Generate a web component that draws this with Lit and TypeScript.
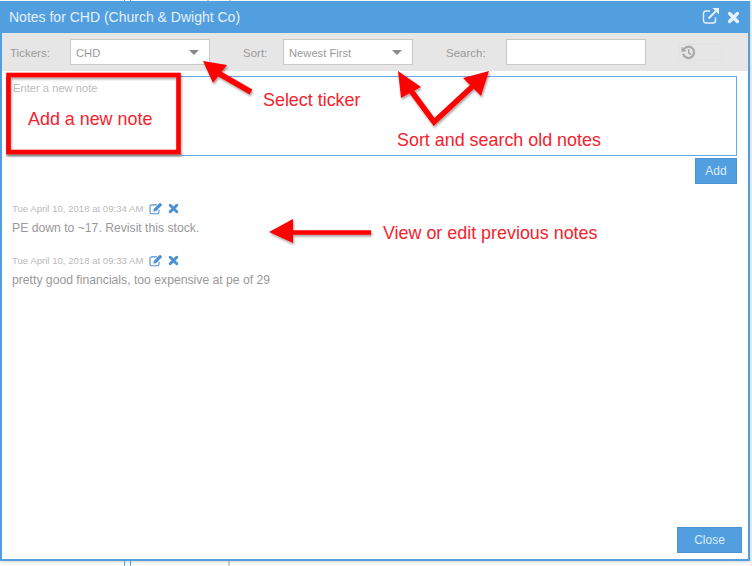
import { LitElement, html, css, svg } from "lit";
import { customElement } from "lit/decorators.js";

const closeIcon = (cls: string) => html`<svg class=${cls} viewBox="0 0 12 12"><path d="M2.4 2.4 9.6 9.6M9.6 2.4 2.4 9.6" fill="none" stroke="currentColor" stroke-width="3.2" stroke-linecap="round"/></svg>`;
const editIcon = html`<svg class="edit" viewBox="0 0 14 13"><path d="M10 7.8v2.2a1.7 1.7 0 0 1-1.7 1.7H2.7A1.7 1.7 0 0 1 1 10V4.6a1.7 1.7 0 0 1 1.7-1.7h5.2" fill="none" stroke="currentColor" stroke-width="1.1"/><path d="M4.8 6.9 10.6.9a.6.6 0 0 1 .8 0l1.5 1.5a.6.6 0 0 1 0 .8L7 9.2l-2.6.3z" fill="currentColor"/></svg>`;

const arrows = svg`
  <defs><filter id="sh" x="-20%" y="-20%" width="150%" height="150%"><feDropShadow dx="1" dy="2" stdDeviation="1.2" flood-color="#000" flood-opacity=".35"/></filter></defs>
  <rect x="6" y="154" width="176" height="2.500" fill="#c4c4c4"/>
  <g filter="url(#sh)">
    <rect x="8.500" y="75" width="170" height="77" fill="none" stroke="#f00" stroke-width="4.600"/>
    <path d="M203 61 227 65 213 83z" fill="#f00"/>
    <path d="M218 73 251 92" fill="none" stroke="#f00" stroke-width="5.500"/>
    <path d="M398 71 421 87 401 98z" fill="#f00"/>
    <path d="M489 71 463 78 481 96z" fill="#f00"/>
    <path d="M409 88 434 122 474 85" fill="none" stroke="#f00" stroke-width="5.500"/>
    <path d="M269 232 293 219 293 243z" fill="#f00"/>
    <path d="M290 232.500H371" fill="none" stroke="#f00" stroke-width="4.500"/>
  </g>`;

@customElement("app-root")
export class AppRoot extends LitElement {
  static styles = css`
    :host { display: block; position: relative; width: 752px; height: 566px; overflow: hidden; background: #fff; font-family: "Liberation Sans", Arial, sans-serif; font-weight: 400; color: #999; }
    .back { position: absolute; inset: 0; }
    .window { position: absolute; left: 0; top: 1px; width: 750px; height: 560px; box-sizing: border-box; border: 2px solid #529fe0; border-top: 0; background: #fff; display: flex; flex-direction: column; box-shadow: 0 1px 3px rgba(0,0,0,.18); }
    .title { height: 32px; flex: none; background: #529fe0; color: #e6f1fb; display: flex; align-items: center; padding: 0 8px 0 7px; font-size: 14px; }
    .title span { flex: 1; }
    .title svg { display: block; color: #e8f2fb; }
    .share { width: 18px; height: 18px; margin: -2px 7px 0 0; }
    .x { width: 13px; height: 13px; }
    .bar { height: 38px; flex: none; background: #e6e6e6; display: flex; align-items: center; font-size: 11.5px; color: #999; }
    .bar label { display: block; padding-top: 1px; }
    .field { box-sizing: border-box; height: 26px; background: #fff; border: 1px solid #c9c9c9; display: flex; align-items: center; justify-content: space-between; padding: 1px 10px 0 5px; font-size: 11.2px; color: #999; }
    .caret { width: 0; height: 0; margin-top: -1px; border-left: 5.5px solid transparent; border-right: 5.5px solid transparent; border-top: 5.5px solid #8a8a8a; }
    .l1 { margin-left: 8px; width: 60px; }
    .f1 { width: 140px; }
    .l2 { margin-left: 33px; width: 40px; }
    .f2 { width: 130px; }
    .l3 { margin-left: 33px; width: 60px; }
    .f3 { width: 140px; }
    .hist { box-sizing: border-box; margin-left: 33px; width: 43px; height: 17px; border: 1px solid #e2e2e2; display: flex; align-items: center; padding-left: 1px; }
    .hist svg { width: 15px; height: 15px; display: block; color: #a9a9a9; }
    .body { flex: 1; display: flex; flex-direction: column; padding: 5px 11px 6px 4px; min-height: 0; }
    .ta { box-sizing: border-box; height: 80px; flex: none; border: 1px solid #62a9e4; padding: 5px 6px; font-size: 11.2px; color: #bbb; }
    .add-row { display: flex; justify-content: flex-end; margin-top: 2px; }
    .btn { box-sizing: border-box; background: #529fe0; border: 1px solid #4a94d3; color: #dcecf9; font-size: 12px; display: flex; align-items: center; justify-content: center; }
    .add { width: 42px; height: 26px; }
    .notes { flex: 1; padding: 17px 0 0 6px; }
    .note { margin-bottom: 12px; height: 40px; display: flex; flex-direction: column; }
    .meta { height: 15px; flex: none; display: flex; align-items: center; font-size: 9.6px; color: #bbb; }
    .edit { width: 14px; height: 13px; margin-left: 6px; color: #4a90d2; display: block; }
    .del { width: 11px; height: 11px; margin-left: 5px; color: #4a90d2; display: block; }
    .text { font-size: 12.2px; line-height: 25px; color: #999; }
    .foot { display: flex; justify-content: flex-end; margin-right: -5px; }
    .close { width: 65px; height: 26px; }
    .overlay { position: absolute; left: 0; top: 0; width: 752px; height: 566px; pointer-events: none; }
    .note-a { position: absolute; color: #f5222d; font-size: 17.9px; line-height: 20px; white-space: nowrap; }
    .a1 { left: 28px; top: 109px; }
    .a2 { left: 263px; top: 90px; }
    .a3 { left: 397px; top: 130px; }
    .a4 { left: 383px; top: 223px; }
    .tick { position: absolute; width: 1px; }
    .blue { background: #5fa8e4; }
    .gray { background: #cfcfcf; width: 2px; }
    .t { top: 0; height: 1px; }
    .b { top: 561px; height: 5px; }
    .rail { position: absolute; left: 750px; top: 0; width: 2px; height: 566px; background: #f2f2f2; }
  `;

  render() {
    return html`
      <div class="back">
        <i class="tick blue t" style="left:124px"></i><i class="tick blue t" style="left:130px"></i>
        <i class="tick gray t" style="left:207px"></i><i class="tick gray t" style="left:229px"></i>
        <i class="tick blue b" style="left:124px"></i><i class="tick blue b" style="left:130px"></i>
        <i class="tick gray b" style="left:228px"></i>
        <div class="rail"></div>
      </div>
      <div class="window">
        <div class="title">
          <span>Notes for CHD (Church &amp; Dwight Co)</span>
          <svg class="share" viewBox="0 0 18 18"><path d="M13.5 10.5v3a2.5 2.5 0 0 1-2.5 2.5H4a2.5 2.5 0 0 1-2.5-2.5V6.500A2.500 2.500 0 0 1 4 4h4" fill="none" stroke="currentColor" stroke-width="1.4"/><path d="M6.500 11.500 14 4" fill="none" stroke="currentColor" stroke-width="2"/><path d="M10.500 1H17v6.500z" fill="currentColor"/></svg>
          ${closeIcon("x")}
        </div>
        <div class="bar">
          <label class="l1">Tickers:</label>
          <div class="field f1">CHD<i class="caret"></i></div>
          <label class="l2">Sort:</label>
          <div class="field f2">Newest First<i class="caret"></i></div>
          <label class="l3">Search:</label>
          <div class="field f3"></div>
          <div class="hist"><svg viewBox="0 0 16 16"><path d="M3 4.500A6 6 0 1 1 2.200 9.500" fill="none" stroke="currentColor" stroke-width="2.400"/><path d="M0.500 1.800 6 6.500 0.500 7.500z" fill="currentColor"/><path d="M8.300 4.500v4l2.700 1.700" fill="none" stroke="currentColor" stroke-width="1.800"/></svg></div>
        </div>
        <div class="body">
          <div class="ta">Enter a new note</div>
          <div class="add-row"><div class="btn add">Add</div></div>
          <div class="notes">
            <div class="note">
              <div class="meta">Tue April 10, 2018 at 09:34 AM ${editIcon}${closeIcon("del")}</div>
              <div class="text">PE down to ~17. Revisit this stock.</div>
            </div>
            <div class="note">
              <div class="meta">Tue April 10, 2018 at 09:33 AM ${editIcon}${closeIcon("del")}</div>
              <div class="text">pretty good financials, too expensive at pe of 29</div>
            </div>
          </div>
          <div class="foot"><div class="btn close">Close</div></div>
        </div>
      </div>
      <svg class="overlay" viewBox="0 0 752 566">${arrows}</svg>
      <div class="note-a a1">Add a new note</div>
      <div class="note-a a2">Select ticker</div>
      <div class="note-a a3">Sort and search old notes</div>
      <div class="note-a a4">View or edit previous notes</div>
    `;
  }
}
